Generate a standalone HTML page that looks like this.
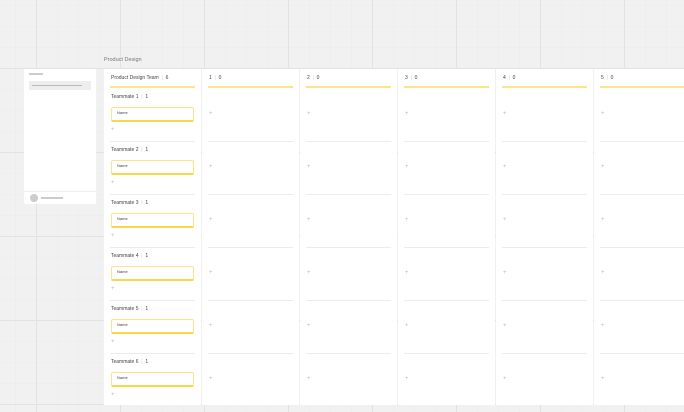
<!DOCTYPE html>
<html><head><style>
*{margin:0;padding:0;box-sizing:border-box}
body{width:684px;height:412px;overflow:hidden;position:relative;font-family:"Liberation Sans",sans-serif;
background-color:#f1f1f1;
background-image:linear-gradient(90deg,#e2e2e2 1px,transparent 1px),linear-gradient(#e2e2e2 1px,transparent 1px),linear-gradient(90deg,#eeeeee 1px,transparent 1px),linear-gradient(#eeeeee 1px,transparent 1px);
background-size:84px 84px,84px 84px,21px 21px,21px 21px;background-position:36px 68px,36px 68px,36px 68px,36px 68px}
.abs{position:absolute}
.title{left:104px;top:57px;font-size:5.5px;color:#777}
.side{left:24px;top:69px;width:72px;height:135px;background:#fff;border-radius:2px}
.col{position:absolute;top:69px;height:336px;background:#fff;width:97px}
.hdr{position:absolute;left:7px;top:6px;font-size:5px;color:#444}
.hl{position:absolute;left:6px;right:6px;top:17px;height:2px;background:#fbe489}
.sep{position:absolute;left:6px;right:6px;height:1px;background:#ececec}
.plus{position:absolute;left:7px;font-size:6px;color:#bbb}
.tm{position:absolute;left:7px;font-size:5px;color:#444}
.card{position:absolute;left:7px;width:83px;height:15px;border:1px solid #fbe489;border-bottom:2px solid #f7d84a;border-radius:2px;font-size:4px;color:#444;padding:2px 5px}
</style></head><body>
<div class="abs title">Product Design</div>
<div class="abs side">
 <div class="abs" style="left:5px;top:4px;width:14px;height:2px;background:#ccc"></div>
 <div class="abs" style="left:5px;top:12px;width:62px;height:9px;background:#eee"></div>
 <div class="abs" style="left:8px;top:16px;width:50px;height:1px;background:#bbb"></div>
 <div class="abs" style="left:0;right:0;top:122px;height:1px;background:#eee"></div>
 <div class="abs" style="left:6px;top:125px;width:8px;height:8px;border-radius:50%;background:#ccc"></div>
 <div class="abs" style="left:17px;top:128px;width:22px;height:2px;background:#ccc"></div>
</div>
<div class="col" style="left:104px">
 <div class="hdr">Product Design Team &nbsp;<span style="color:#ccc">|</span>&nbsp; 6</div>
 <div class="hl"></div>
 <div class="tm" style="top:25px">Teammate 1 &nbsp;<span style="color:#ccc">|</span>&nbsp; 1</div><div class="card" style="top:38px">Name</div><div class="plus" style="top:58px">+</div><div class="sep" style="top:72px"></div>
 <div class="tm" style="top:78px">Teammate 2 &nbsp;<span style="color:#ccc">|</span>&nbsp; 1</div><div class="card" style="top:91px">Name</div><div class="plus" style="top:111px">+</div><div class="sep" style="top:125px"></div>
 <div class="tm" style="top:131px">Teammate 3 &nbsp;<span style="color:#ccc">|</span>&nbsp; 1</div><div class="card" style="top:144px">Name</div><div class="plus" style="top:164px">+</div><div class="sep" style="top:178px"></div>
 <div class="tm" style="top:184px">Teammate 4 &nbsp;<span style="color:#ccc">|</span>&nbsp; 1</div><div class="card" style="top:197px">Name</div><div class="plus" style="top:217px">+</div><div class="sep" style="top:231px"></div>
 <div class="tm" style="top:237px">Teammate 5 &nbsp;<span style="color:#ccc">|</span>&nbsp; 1</div><div class="card" style="top:250px">Name</div><div class="plus" style="top:270px">+</div><div class="sep" style="top:284px"></div>
 <div class="tm" style="top:290px">Teammate 6 &nbsp;<span style="color:#ccc">|</span>&nbsp; 1</div><div class="card" style="top:303px">Name</div><div class="plus" style="top:323px">+</div>
</div>
<script>
for(let i=0;i<5;i++){
 let x=202+i*98;
 let h='<div class="col" style="left:'+x+'px"><div class="hdr">'+(i+1)+' &nbsp;<span style="color:#ccc">|</span>&nbsp; 0</div><div class="hl"></div>';
 for(let r=0;r<6;r++){
  h+='<div class="plus" style="top:'+(42+r*53)+'px">+</div>';
  if(r<5)h+='<div class="sep" style="top:'+(72+r*53)+'px"></div>';
 }
 h+='</div>';
 document.body.insertAdjacentHTML('beforeend',h);
}
</script>
</body></html>
